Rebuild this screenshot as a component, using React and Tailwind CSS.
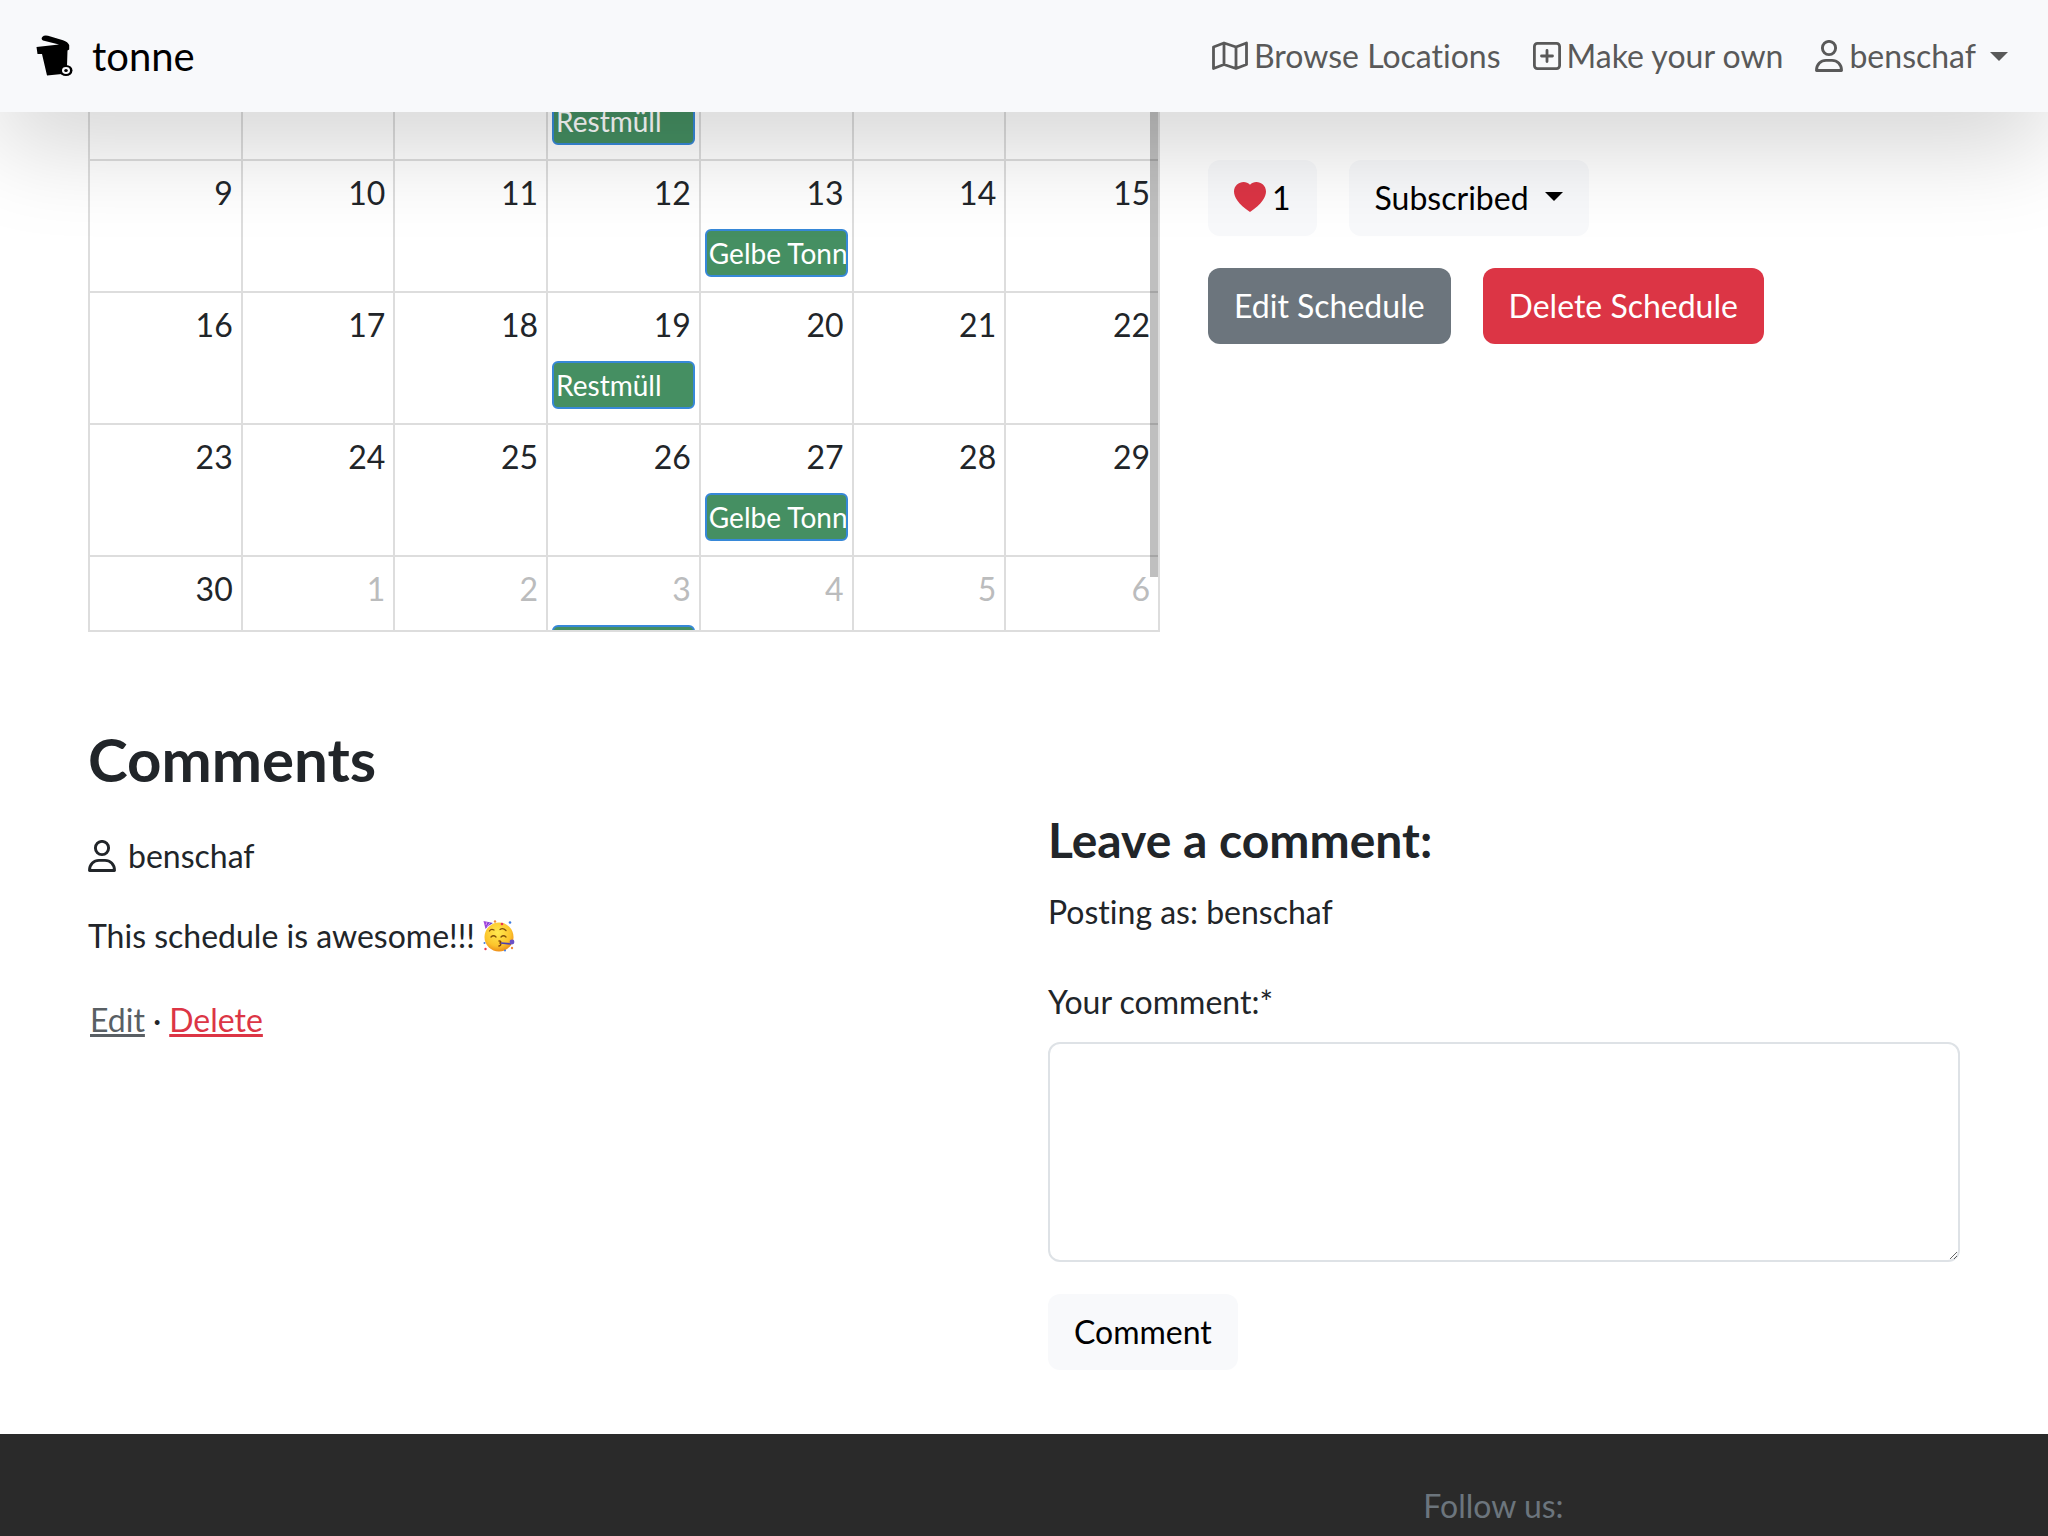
import { useId } from "react";
import { BsHeartFill } from "react-icons/bs";

const weeks = [
  [["2"], ["3"], ["4"], ["5", "Restmüll"], ["6"], ["7"], ["8"]],
  [["9"], ["10"], ["11"], ["12"], ["13", "Gelbe Tonne"], ["14"], ["15"]],
  [["16"], ["17"], ["18"], ["19", "Restmüll"], ["20"], ["21"], ["22"]],
  [["23"], ["24"], ["25"], ["26"], ["27", "Gelbe Tonne"], ["28"], ["29"]],
  [["30"], ["1"], ["2"], ["3", "Restmüll"], ["4"], ["5"], ["6"]],
];

function BinLogo() {
  return (
    <svg viewBox="0 0 38 42" className="h-[42px] w-[38px]" aria-hidden="true">
      <path d="M0.500 12 L23 9.500 L7 5.500 Q4.500 4 6.500 1.800 Q8 0 12 0.800 L27 5.200 Q32 7 33.200 10 V14.500 L31.500 15.500 L31 31 L26 34 L26 39 L11 40.500 L6 19 L1.500 19 Z" />
      <ellipse cx="30" cy="35.500" rx="6.500" ry="5.500" />
      <ellipse cx="30" cy="35.500" rx="4" ry="3.400" fill="#f8f9fb" />
      <ellipse cx="30" cy="35.500" rx="1.800" ry="1.500" />
    </svg>
  );
}

function MapIcon() {
  return (
    <svg viewBox="0 0 36 30" className="h-[30px] w-9" fill="none" stroke="currentColor" strokeWidth="2.8" strokeLinejoin="round" aria-hidden="true">
      <path d="M1.5 6 L12 2 L24 6 L34.5 2 V23.500 L24 27.500 L12 23.500 L1.5 27.500 Z M12 2 V23.500 M24 6 V27.500" />
    </svg>
  );
}

function PlusSquareIcon() {
  return (
    <svg viewBox="0 0 28 28" className="size-7" fill="none" stroke="currentColor" strokeWidth="2.8" strokeLinecap="round" aria-hidden="true">
      <rect x="1.4" y="1.4" width="25.2" height="25.2" rx="3" />
      <path d="M14 8.500 V19.500 M8.500 14 H19.500" />
    </svg>
  );
}

function PersonIcon() {
  return (
    <svg viewBox="0 0 28 32" className="h-8 w-7" fill="none" stroke="currentColor" strokeWidth="2.9" strokeLinejoin="round" aria-hidden="true">
      <circle cx="14" cy="8" r="6.6" />
      <path d="M1.5 30.500 C1.5 24 6 20.400 11 20.400 H17 C22 20.400 26.500 24 26.500 30.500 Z" />
    </svg>
  );
}

function Caret() {
  return <span aria-hidden="true" className="border-x-[9px] border-t-[9px] border-x-transparent border-t-current" />;
}

function PartyFace() {
  const hat = useId();
  const face = useId();
  return (
    <svg viewBox="0 0 32 32" className="inline-block size-8 align-[-4px]" role="img" aria-label="Partying face">
      <defs>
        <radialGradient id={face} cx="0.45" cy="0.35" r="0.65">
          <stop offset="0" stopColor="#ffe94f" />
          <stop offset="0.7" stopColor="#fcc42c" />
          <stop offset="1" stopColor="#ee8f1a" />
        </radialGradient>
        <linearGradient id={hat}>
          <stop offset="0" stopColor="#b04ae0" />
          <stop offset="1" stopColor="#4b3fc4" />
        </linearGradient>
      </defs>
      <circle cx="16" cy="17" r="14.5" fill={`url(#${face})`} />
      <path d="M0.5 1 L10 3 Q6 5 2.5 9 Z" fill={`url(#${hat})`} />
      <path d="M4 2 L3 5 M7 2.5 L4 7" stroke="#e28cf0" strokeWidth="1" />
      <path d="M6.5 11 Q8 8.500 11 10 M17 9.500 Q20 7.500 23 10.500 M8 17 Q10.500 14.500 13 17 M18 17 Q20.500 14.500 23 17" fill="none" stroke="#80500b" strokeWidth="1.3" strokeLinecap="round" />
      <path d="M16 21 Q19 21 17 23 Q19 25 16 26" fill="none" stroke="#80400b" strokeWidth="1.4" strokeLinecap="round" />
      <path d="M18 23 L28 24" stroke="#4b3fb4" strokeWidth="1.6" />
      <circle cx="29" cy="22" r="2.4" fill="#6b50c8" />
      <g fill="#e8384f">
        <circle cx="19" cy="4" r="1.3" />
        <circle cx="2.500" cy="29" r="1.200" />
      </g>
      <g fill="#3f7be0">
        <circle cx="27" cy="2.500" r="1.300" />
        <circle cx="1.500" cy="23" r="1" />
        <circle cx="22" cy="30.500" r="1" />
      </g>
      <g fill="#f08a3c">
        <circle cx="12" cy="1.500" r="1.200" />
        <circle cx="29" cy="28" r="1.200" />
      </g>
    </svg>
  );
}

function Calendar() {
  return (
    <div className="relative h-[605px] overflow-hidden border-r-2 border-b-2 border-[#ddd]">
      <table className="w-full table-fixed border-collapse">
        <tbody>
          {weeks.map((week, w) => (
            <tr key={w}>
              {week.map(([day, event], d) => (
                <td key={d} className="h-[132px] border-2 border-r-0 border-[#ddd] p-0 align-top">
                  <div className={w === 4 && d > 0 ? "px-2 pt-2 text-right leading-[48px] text-[#bbbcbd]" : "px-2 pt-2 text-right leading-[48px]"}>{day}</div>
                  {event && (
                    <a href="#event" className="mx-1 mt-3 block h-12 overflow-hidden rounded-md border-2 border-[#3788d8] bg-[#458f62] px-[2px] text-[28px] leading-[44px] whitespace-nowrap text-white">
                      {event}
                    </a>
                  )}
                </td>
              ))}
            </tr>
          ))}
        </tbody>
      </table>
      <div className="absolute top-0 right-0 h-[550px] w-2 bg-black/25" />
    </div>
  );
}

export default function App() {
  const button = "h-[76px] rounded-xl px-[26px]";
  return (
    <div className="flex h-screen flex-col overflow-hidden bg-white font-[Lato,sans-serif] text-[32px] leading-[48px] text-[#212529] [font-variant-ligatures:no-common-ligatures]">
      <header className="relative z-10 flex h-28 shrink-0 items-center justify-between bg-[#f8f9fb] pr-10 pl-9 shadow-[0_32px_96px_rgba(0,0,0,0.175)]">
        <a href="#home" className="flex items-center gap-[18px] text-[40px] text-black">
          <BinLogo />
          <span>tonne</span>
        </a>
        <nav className="flex items-center gap-8 text-[#595959]">
          <a href="#locations" className="flex items-center gap-[6px]"><MapIcon />Browse Locations</a>
          <a href="#new" className="flex items-center gap-[6px]"><PlusSquareIcon />Make your own</a>
          <button className="flex items-center gap-[6px]"><PersonIcon />benschaf<span className="ml-2 flex"><Caret /></span></button>
        </nav>
      </header>

      <main className="shrink-0 px-[88px]">
        <section className="grid grid-cols-[1072fr_752fr] gap-12">
          <div className="-mt-[85px]">
            <Calendar />
          </div>
          <div className="flex flex-col gap-8 pt-12">
            <div className="flex gap-8">
              <button className={`${button} flex items-center gap-[6px] bg-[#f8f9fb] text-black`}><BsHeartFill className="size-8 text-[#dc3545]" />1</button>
              <button className={`${button} flex items-center gap-4 bg-[#f8f9fb] text-black`}>Subscribed<span className="flex pb-1"><Caret /></span></button>
            </div>
            <div className="flex gap-8">
              <button className={`${button} bg-[#6c757d] text-white`}>Edit Schedule</button>
              <button className={`${button} bg-[#dc3545] text-white`}>Delete Schedule</button>
            </div>
          </div>
        </section>

        <section className="grid grid-cols-2 gap-12 pt-24">
          <div>
            <h2 className="text-[60px] leading-[62px] font-bold">Comments</h2>
            <p className="mt-[42px] flex items-center gap-3"><PersonIcon />benschaf</p>
            <p className="mt-8">This schedule is awesome!!! <PartyFace /></p>
            <p className="mt-9 flex gap-2 pl-[2px]"><a href="#edit" className="text-[#595f64] underline">Edit</a><span>·</span><a href="#delete" className="text-[#dc3545] underline">Delete</a></p>
          </div>
          <form className="pt-[88px]">
            <h3 className="text-[48px] leading-[48px] font-bold">Leave a comment:</h3>
            <p className="mt-6">Posting as: benschaf</p>
            <label htmlFor="comment" className="mt-[42px] block">Your comment:*</label>
            <textarea id="comment" className="mt-4 block h-[220px] w-full rounded-xl border-2 border-[#dee2e6] bg-white p-4" />
            <button type="button" className={`${button} mt-8 bg-[#f8f9fb] text-black`}>Comment</button>
          </form>
        </section>
      </main>

      <footer className="mt-16 grow bg-[#2a2a2a] pt-12 text-[#6c757d]">
        <p className="ml-[69.5%]">Follow us:</p>
      </footer>
    </div>
  );
}
